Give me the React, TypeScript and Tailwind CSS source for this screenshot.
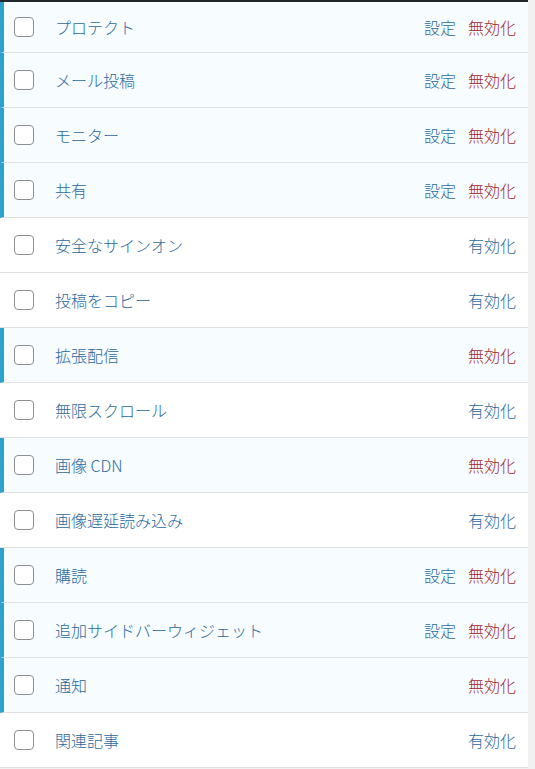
import React from "react";

interface Modulo {
  nome: string;
  ativo: boolean;
  config?: boolean;
}

const modulos: Modulo[] = [
  { nome: "プロテクト", ativo: true, config: true },
  { nome: "メール投稿", ativo: true, config: true },
  { nome: "モニター", ativo: true, config: true },
  { nome: "共有", ativo: true, config: true },
  { nome: "安全なサインオン", ativo: false },
  { nome: "投稿をコピー", ativo: false },
  { nome: "拡張配信", ativo: true },
  { nome: "無限スクロール", ativo: false },
  { nome: "画像 CDN", ativo: true },
  { nome: "画像遅延読み込み", ativo: false },
  { nome: "購読", ativo: true, config: true },
  { nome: "追加サイドバーウィジェット", ativo: true, config: true },
  { nome: "通知", ativo: true },
  { nome: "関連記事", ativo: false },
];

export default function App() {
  return (
    <main
      className="min-h-screen bg-[#f1f1f1] w-[535px] overflow-hidden"
      style={{ fontFamily: '"Noto Sans CJK JP", "Noto Sans", sans-serif' }}
    >
      <div className="w-[528px] bg-white">
        {/* barra escura do topo */}
        <div className="h-[2px] bg-[#23282d]" />

        {modulos.map((m, i) => (
          <div
            key={m.nome}
            className={
              (i === 0 ? "h-[51px] " : "h-[55px] ") +
              "flex items-center border-b border-[#e1e1e1] text-[16px] leading-none font-light " +
              (m.ativo ? "bg-[#f7fcfe] border-l-4 border-l-[#2ea2cc] pl-[10px]" : "bg-white pl-[14px]")
            }
          >
            <span className="w-[20px] h-[20px] rounded-[4px] border border-[#8c8f94] bg-white shrink-0" />
            <span className="ml-[21px] text-[#2a6aa0] flex-1">{m.nome}</span>
            <div className="flex items-center gap-[12px] pr-[12px]">
              {m.ativo && m.config && <span className="text-[#2a6aa0]">設定</span>}
              {m.ativo ? (
                <span className="text-[#a3262c]">無効化</span>
              ) : (
                <span className="text-[#2a6aa0]">有効化</span>
              )}
            </div>
          </div>
        ))}
      </div>
    </main>
  );
}
